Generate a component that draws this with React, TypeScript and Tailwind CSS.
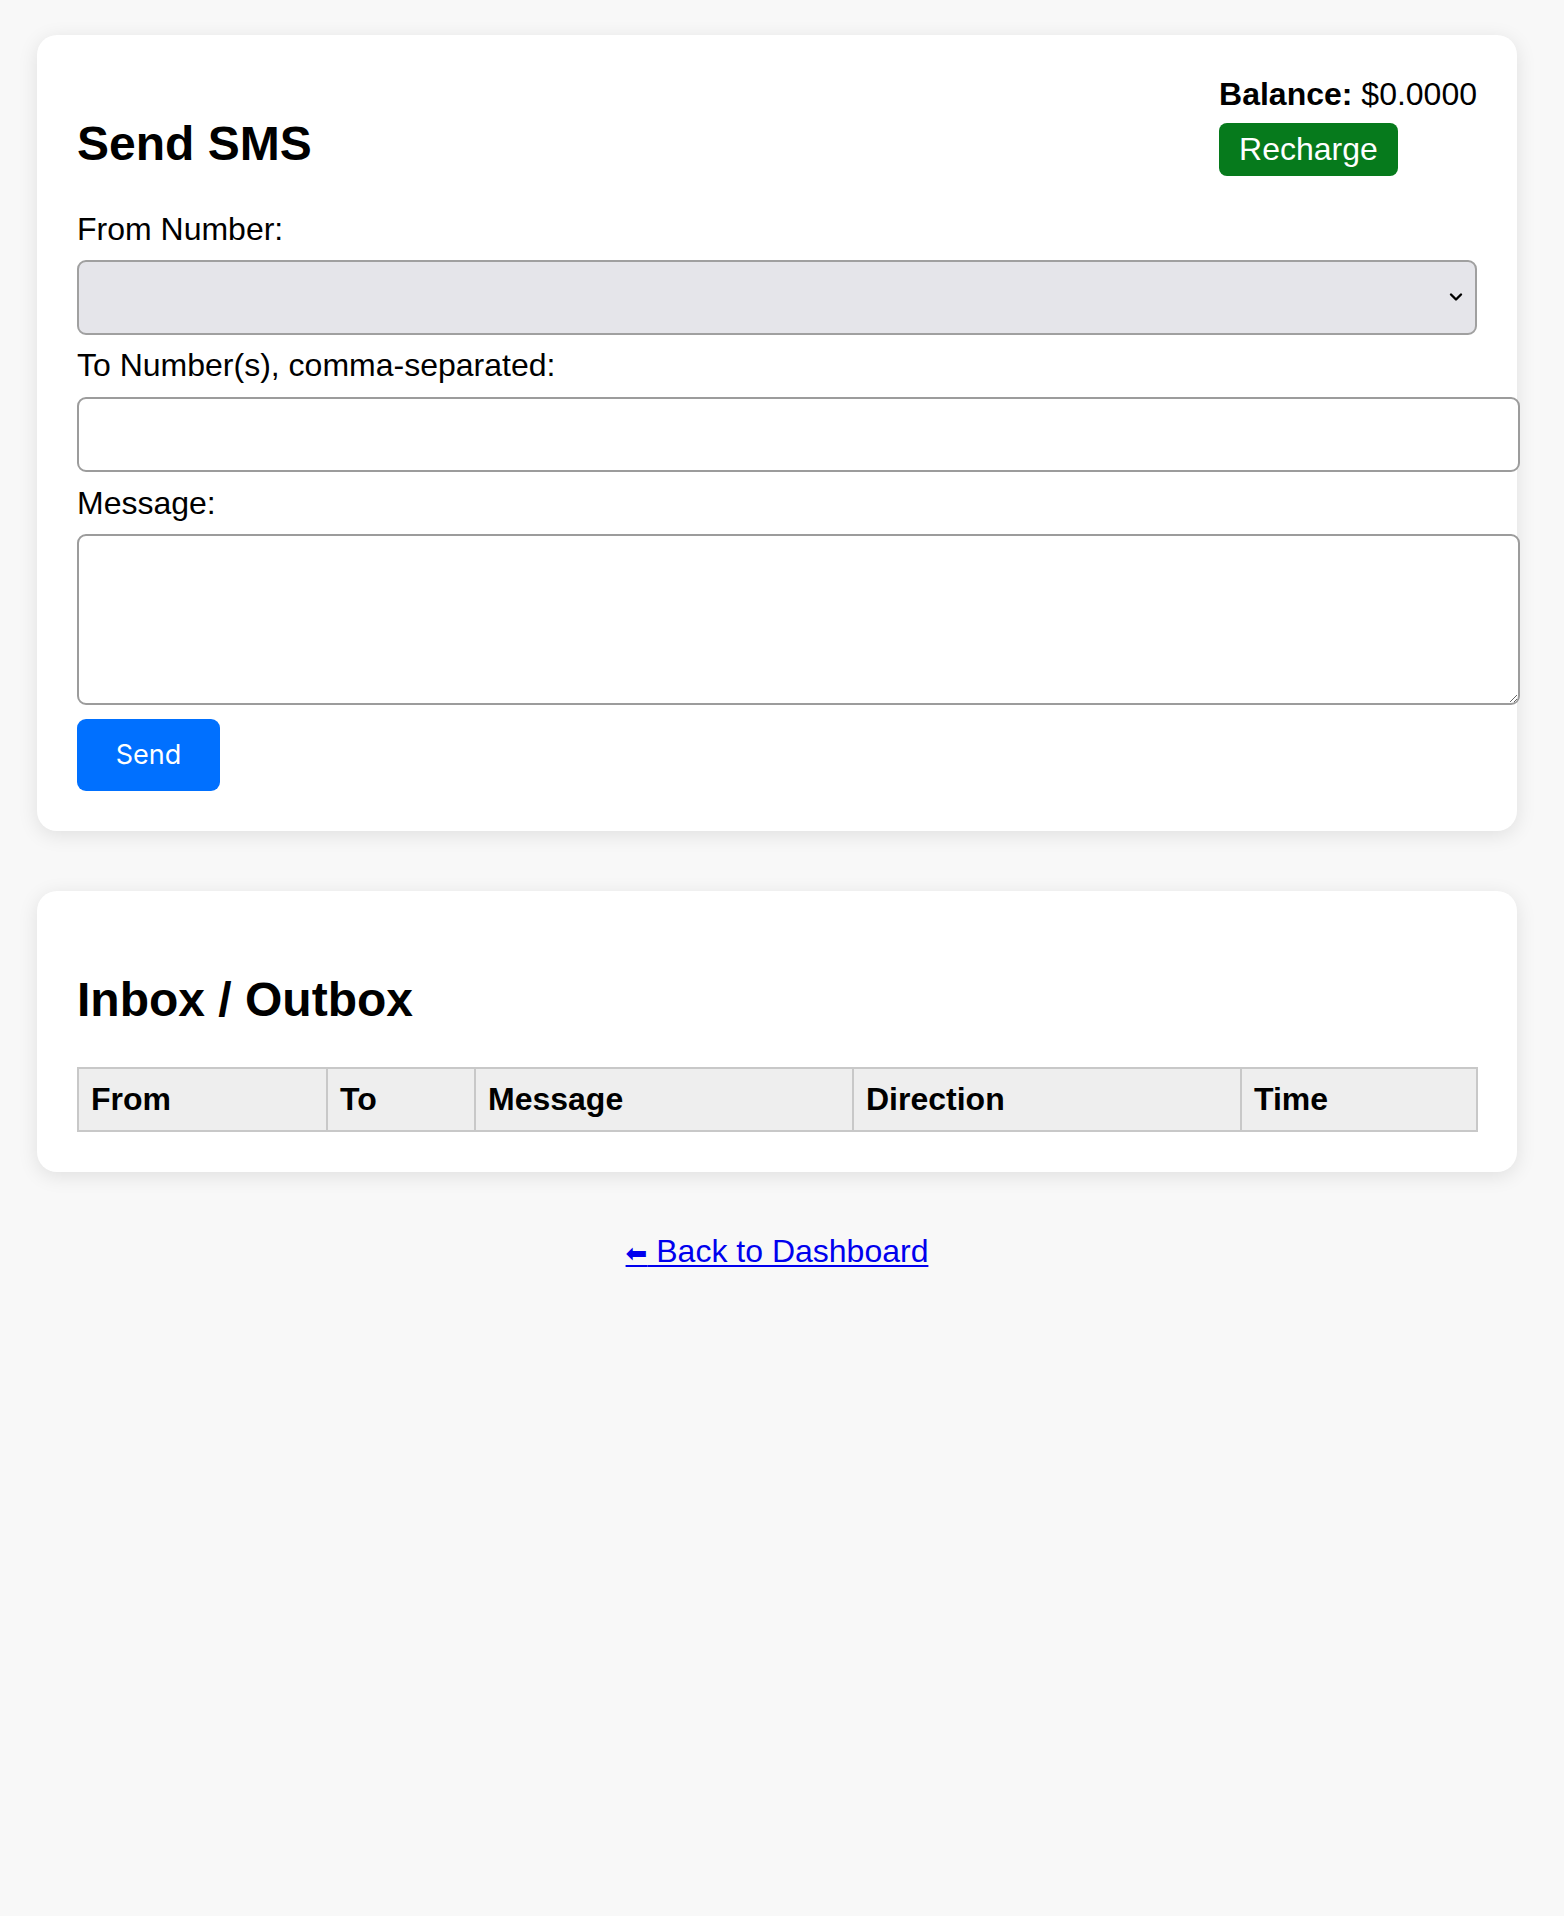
import React from 'react'

const headers = [
  { label: 'From', w: 'w-[249px]' },
  { label: 'To', w: 'w-[148px]' },
  { label: 'Message', w: 'w-[378px]' },
  { label: 'Direction', w: 'w-[388px]' },
  { label: 'Time', w: 'w-[236px]' },
]

const App: React.FC = () => {
  return (
    <div className="min-h-screen bg-[#f8f8f8] pl-[37px] pr-[47px] pt-[35px] pb-[40px] font-['Liberation_Sans',Arial,sans-serif] text-[32px] leading-[1.15] text-black">
      {/* Send SMS */}
      <div className="bg-white rounded-[20px] shadow-[0_4px_20px_rgba(0,0,0,0.1)] px-[40px] pt-[41px] pb-[40px]">
        <div className="flex justify-between items-start">
          <h2 className="text-[48px] font-bold mt-[40px] mb-[40px]">Send SMS</h2>
          <div>
            <div>
              <span className="font-bold">Balance:</span> $0.0000
            </div>
            <a
              href="#"
              className="inline-block mt-[10px] bg-[#067a1c] text-white px-[20px] py-[8px] rounded-[8px]"
            >
              Recharge
            </a>
          </div>
        </div>

        <label className="block mb-[12px]">From Number:</label>
        <div className="relative mb-[12px]">
          <select className="block w-full h-[75px] appearance-none bg-[#e5e5ea] border-2 border-[#a0a0a0] rounded-[9px] px-[18px]"></select>
          <svg
            className="absolute right-[14px] top-[32px] pointer-events-none"
            width="14"
            height="10"
            viewBox="0 0 14 10"
          >
            <path d="M2 2.5 L7 7.5 L12 2.5" fill="none" stroke="#000" strokeWidth="2.4" strokeLinecap="round" strokeLinejoin="round" />
          </svg>
        </div>

        <label className="block mb-[13px]">To Number(s), comma-separated:</label>
        <input
          type="text"
          className="block w-[calc(100%+43px)] h-[75px] bg-white border-2 border-[#9c9c9c] rounded-[9px] px-[20px] mb-[13px] outline-none"
        />

        <label className="block mb-[12px]">Message:</label>
        <textarea className="block w-[calc(100%+43px)] h-[171px] bg-white border-2 border-[#9c9c9c] rounded-[9px] px-[20px] py-[12px] mb-[14px] outline-none"></textarea>

        <button className="w-[143px] h-[72px] bg-[#0070ff] text-white rounded-[9px] font-['Inter',sans-serif] text-[27px]">
          Send
        </button>
      </div>

      {/* Inbox / Outbox */}
      <div className="mt-[60px] bg-white rounded-[20px] shadow-[0_4px_20px_rgba(0,0,0,0.1)] px-[40px] pt-[40px] pb-[40px]">
        <h2 className="text-[48px] font-bold mt-[41px] mb-[40px]">Inbox / Outbox</h2>
        <table className="w-full table-fixed border-collapse">
          <thead>
            <tr>
              {headers.map((h) => (
                <th
                  key={h.label}
                  className={`${h.w} bg-[#eeeeee] border-2 border-[#c8c8c8] px-[12px] py-[12px] text-left font-bold`}
                >
                  {h.label}
                </th>
              ))}
            </tr>
          </thead>
          <tbody></tbody>
        </table>
      </div>

      <div className="mt-[61px] text-center">
        <a href="#" className="text-[#0000ee] underline decoration-2 underline-offset-[3px]">
          <span className="font-['DejaVu_Sans',sans-serif] text-[26px]">⬅</span> Back to Dashboard
        </a>
      </div>
    </div>
  )
}

export default App
